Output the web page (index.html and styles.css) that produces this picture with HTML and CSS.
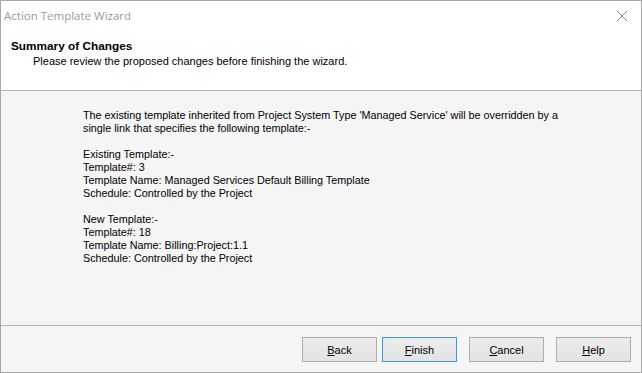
FILE: index.html
```html
<!DOCTYPE html>
<html lang="en">
<head>
    <meta charset="UTF-8">
    <title>Action Template Wizard</title>
    <link rel="stylesheet" href="styles.css">
</head>
<body>
    <div class="wizard-window">
        <div class="titlebar">
            <span class="title">Action Template Wizard</span>
            <svg class="close-icon" width="12" height="12" viewBox="0 0 12 12">
                <path d="M1 1 L11 11 M11 1 L1 11" stroke="#8a8a8a" stroke-width="1" fill="none"/>
            </svg>
        </div>

        <div class="header">
            <div class="header-title">Summary of Changes</div>
            <div class="header-subtitle">Please review the proposed changes before finishing the wizard.</div>
        </div>

        <div class="content">
            <p>The existing template inherited from Project System Type 'Managed Service' will be overridden by a<br>single link that specifies the following template:-</p>
            <p>Existing Template:-<br>Template#: 3<br>Template Name: Managed Services Default Billing Template<br>Schedule: Controlled by the Project</p>
            <p>New Template:-<br>Template#: 18<br>Template Name: Billing:Project:1.1<br>Schedule: Controlled by the Project</p>
        </div>

        <div class="footer">
            <button class="btn"><u>B</u>ack</button>
            <button class="btn default"><u>F</u>inish</button>
            <button class="btn spaced"><u>C</u>ancel</button>
            <button class="btn spaced"><u>H</u>elp</button>
        </div>
    </div>
</body>
</html>
```

FILE: styles.css
```css
body {
    margin: 0;
    padding: 0;
    width: 642px;
    height: 373px;
    overflow: hidden;
    background-color: #ffffff;
    font-family: 'Liberation Sans', Arial, sans-serif;
    font-size: 11px;
    color: #000000;
}

.wizard-window {
    box-sizing: border-box;
    width: 642px;
    height: 373px;
    border: 1px solid #a8a8a8;
    display: flex;
    flex-direction: column;
}

.titlebar {
    height: 29px;
    background-color: #ffffff;
    display: flex;
    align-items: center;
    justify-content: space-between;
    padding: 0 13px 2px 3px;
}

.title {
    font-family: 'Open Sans', 'Noto Sans', sans-serif;
    font-size: 11.5px;
    color: #9a9a9a;
}

.close-icon {
    display: block;
}

.header {
    height: 59px;
    background-color: #ffffff;
    border-bottom: 1px solid #b4b4b4;
    padding: 7px 0 0 10px;
    box-sizing: border-box;
}

.header-title {
    font-weight: bold;
    font-size: 11.8px;
    line-height: 15px;
}

.header-subtitle {
    padding-left: 22px;
    line-height: 15px;
}

.content {
    flex: 1;
    background-color: #f5f5f5;
    padding: 18px 0 0 82px;
    font-size: 10.8px;
}

.content p {
    margin: 0 0 13px 0;
    line-height: 13px;
}

.footer {
    height: 47px;
    box-sizing: border-box;
    background-color: #f5f5f5;
    border-top: 1px solid #b4b4b4;
    display: flex;
    justify-content: flex-end;
    align-items: flex-start;
    padding: 11px 10px 0 0;
}

.btn {
    width: 75px;
    height: 25px;
    margin-left: 5px;
    border: 1px solid #adadad;
    background: linear-gradient(#ececec, #e3e3e3);
    font-family: 'Liberation Sans', Arial, sans-serif;
    font-size: 11px;
    color: #000000;
    padding: 0;
}

.btn.spaced {
    margin-left: 12px;
}

.btn.default {
    border-color: #3c96f0;
}
```
